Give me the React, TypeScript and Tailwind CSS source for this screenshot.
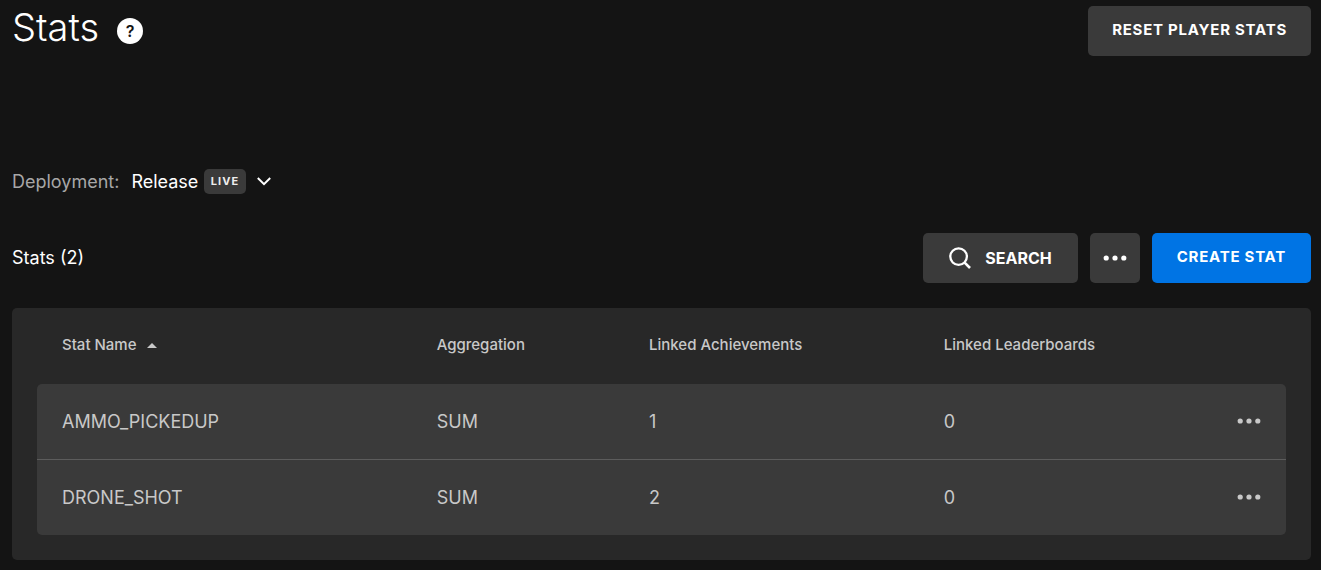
import { useEffect, useState } from "react";

type Stat = {
  name: string;
  aggregation: string;
  achievements: number;
  leaderboards: number;
};

const stats: Stat[] = [
  { name: "AMMO_PICKEDUP", aggregation: "SUM", achievements: 1, leaderboards: 0 },
  { name: "DRONE_SHOT", aggregation: "SUM", achievements: 2, leaderboards: 0 },
];

function Dots() {
  return (
    <svg width="24" height="6" viewBox="0 0 24 6" fill="currentColor" aria-hidden="true">
      <circle cx="3.2" cy="3" r="2.6" />
      <circle cx="12" cy="3" r="2.6" />
      <circle cx="20.8" cy="3" r="2.6" />
    </svg>
  );
}

function SearchIcon() {
  return (
    <svg width="22" height="22" viewBox="0 0 22 22" fill="none" stroke="currentColor" strokeWidth="2.3" aria-hidden="true">
      <circle cx="9.6" cy="9.6" r="8.3" />
      <path d="M15.4 15.4 21 21" strokeWidth="2.6" />
    </svg>
  );
}

function ChevronDown() {
  return (
    <svg width="14" height="9" viewBox="0 0 14 9" fill="none" stroke="currentColor" strokeWidth="2" aria-hidden="true">
      <path d="M0.8 1 7 7.2 13.2 1" />
    </svg>
  );
}

const buttonBase = "flex h-[50px] cursor-pointer items-center justify-center rounded-[5px] font-bold";

export default function App() {
  const [deployment, setDeployment] = useState("Release");
  const [ascending, setAscending] = useState(true);

  useEffect(() => {
    document.body.classList.add("bg-[#141414]");
  }, []);

  const rows = ascending ? stats : [...stats].reverse();

  return (
    <main className="min-h-screen bg-[#141414] px-3 pr-[10px] pt-[6px] pb-[10px] font-['Inter','Liberation_Sans',sans-serif] text-white">
      <header className="flex items-start justify-between">
        <div className="flex items-center gap-[18px]">
          <h1 className="text-[38px] leading-[42px] font-light">Stats</h1>
          <button
            type="button"
            aria-label="Help"
            className="mt-2 flex size-[26px] cursor-pointer items-center justify-center rounded-full bg-white text-[16px] leading-none font-semibold text-[#141414]"
          >
            ?
          </button>
        </div>
        <button type="button" className={`${buttonBase} bg-[#3a3a3a] px-6 pb-[2px] text-[15px] tracking-wider`}>
          RESET PLAYER STATS
        </button>
      </header>

      <div className="mt-[111px] flex h-7 items-center gap-3 text-[18px]">
        <label htmlFor="deployment" className="text-[#a7a7a7]">
          Deployment:
        </label>
        <div className="relative flex items-center">
          <select
            id="deployment"
            value={deployment}
            onChange={(event) => setDeployment(event.target.value)}
            className="cursor-pointer appearance-none [field-sizing:content] bg-transparent pr-[73px] text-white"
          >
            <option value="Release">Release</option>
          </select>
          <div className="pointer-events-none absolute right-0 flex items-center gap-[11px]">
            <span className="rounded-[5px] bg-[#3a3a3a] px-[7px] text-[11px] leading-[25px] font-bold tracking-widest text-[#eeeeee]">
              LIVE
            </span>
            <ChevronDown />
          </div>
        </div>
      </div>

      <section>
        <div className="mt-[38px] flex items-center justify-between">
          <h2 className="pb-[2px] text-[18px]">Stats (2)</h2>
          <div className="flex gap-3">
            <button type="button" className={`${buttonBase} gap-[14px] bg-[#3a3a3a] px-[26px] text-[16px]`}>
              <SearchIcon />
              SEARCH
            </button>
            <button type="button" aria-label="More actions" className={`${buttonBase} w-[50px] bg-[#3a3a3a]`}>
              <Dots />
            </button>
            <button type="button" className={`${buttonBase} bg-[#0074e4] px-[25px] pb-[2px] text-[15px] tracking-wider`}>
              CREATE STAT
            </button>
          </div>
        </div>

        <div className="mt-[25px] rounded-[5px] bg-[#282828] px-[25px] pb-[25px]">
          <table className="w-full table-fixed border-separate border-spacing-0 text-left text-[#c8c8c8]">
            <colgroup>
              <col className="w-[30%]" />
              <col className="w-[17%]" />
              <col className="w-[23.6%]" />
              <col />
              <col className="w-[98px]" />
            </colgroup>
            <thead>
              <tr className="h-[76px] text-[15px] *:px-[25px] *:pb-[2px] *:font-medium">
                <th scope="col" aria-sort={ascending ? "ascending" : "descending"}>
                  <button
                    type="button"
                    onClick={() => setAscending(!ascending)}
                    className="flex cursor-pointer items-center gap-[10px]"
                  >
                    Stat Name
                    <svg
                      width="10"
                      height="5"
                      viewBox="0 0 10 5"
                      fill="currentColor"
                      aria-hidden="true"
                      className={ascending ? "" : "rotate-180"}
                    >
                      <path d="M0 5 5 0l5 5z" />
                    </svg>
                  </button>
                </th>
                <th scope="col">Aggregation</th>
                <th scope="col">Linked Achievements</th>
                <th scope="col">Linked Leaderboards</th>
                <td />
              </tr>
            </thead>
            <tbody className="text-[18px]">
              {rows.map((stat) => (
                <tr
                  key={stat.name}
                  className="h-[76px] *:border-[#5c5c5c] *:bg-[#3a3a3a] *:px-[25px] not-last:*:border-b last:h-[75px] first:*:first:rounded-tl-[5px] first:*:last:rounded-tr-[5px] last:*:first:rounded-bl-[5px] last:*:last:rounded-br-[5px]"
                >
                  <td>{stat.name}</td>
                  <td>{stat.aggregation}</td>
                  <td>{stat.achievements}</td>
                  <td>{stat.leaderboards}</td>
                  <td>
                    <button
                      type="button"
                      aria-label={`Actions for ${stat.name}`}
                      className="ml-auto flex h-6 cursor-pointer items-center pb-[2px]"
                    >
                      <Dots />
                    </button>
                  </td>
                </tr>
              ))}
            </tbody>
          </table>
        </div>
      </section>
    </main>
  );
}
